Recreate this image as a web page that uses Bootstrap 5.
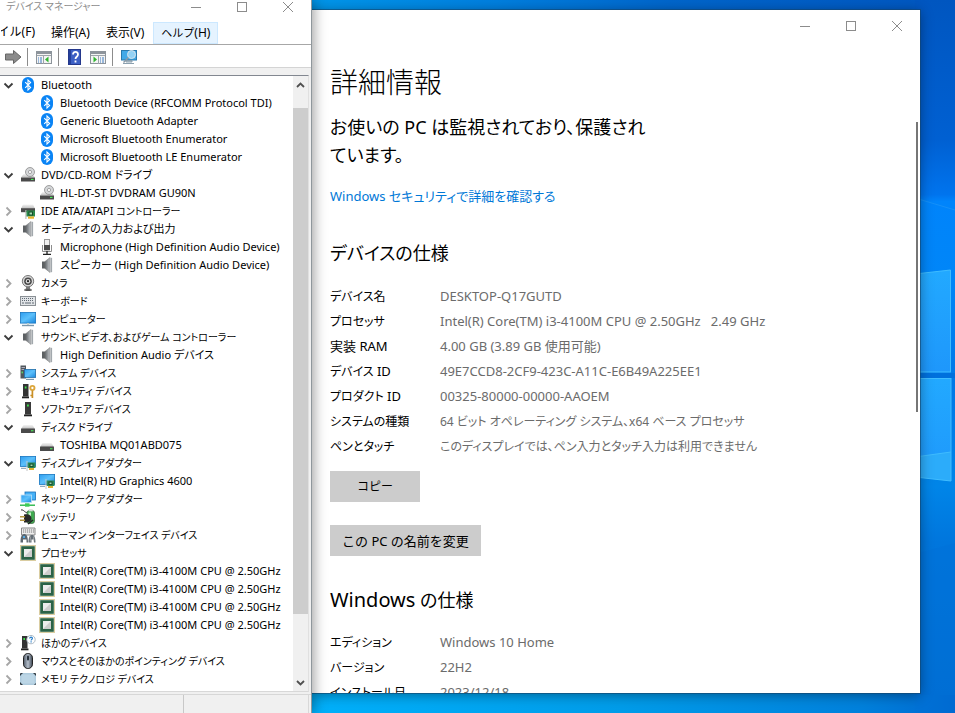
<!DOCTYPE html>
<html lang="ja">
<head>
<meta charset="utf-8">
<meta name="viewport" content="width=device-width, initial-scale=1">
<title>デバイス マネージャー</title>
<link href="https://cdn.jsdelivr.net/npm/bootstrap@5.3.0/dist/css/bootstrap.min.css" rel="stylesheet">
<style>
html, body { height: 100%; }
body { font-family: "Noto Sans", "Noto Sans CJK JP", sans-serif; font-feature-settings: "palt"; color: #000; font-size: 12px; line-height: 18px; }
button { font-family: inherit; }
.desktop { background: #0078d7; }
.wallpaper { left: 0; top: 0; }

/* shared window parts */
.caption-btn { background: none; border: 0; padding: 0; color: #8c8c8c; }
.caption-btn svg, .tool-btn svg, .twisty svg { display: block; }

/* device manager */
.dm-window { left: 0; top: 0; bottom: 0; width: 312px; background: #fff; border-right: 1px solid #8f979c; box-shadow: 2px 0 12px rgba(0,0,0,.38); z-index: 2; }
.dm-title { height: 21px; padding-left: 6px; color: #8d8d8d; }
.dm-title .dm-name { line-height: 12px; font-size: 10px; }
.dm-title .caption-btn { width: 46px; height: 13px; }
.dm-menu { height: 24px; border-bottom: 1px solid #a7a7a7; }
.dm-menu button { background: none; border: 1px solid transparent; padding: 0 7px; height: 22px; line-height: 18px; margin-top: 1px; font-size: 12px; white-space: nowrap; }
.dm-menu .clipped { width: 43px; padding-left: 0; display: flex; justify-content: flex-end; overflow: hidden; }
.dm-menu .hot { background: #e5f3ff; border-color: #cce8ff; margin-left: 1px; }
.dm-menu .kana { font-size: 11px; }
.dm-tools { height: 23px; border-bottom: 1px solid #d4d4d4; padding: 2px 0 0 5px; }
.tool-btn { background: none; border: 0; padding: 0; }
.tool-sep { width: 1px; height: 18px; background: #8c8c8c; }
.dm-body { background: #f0f0f0; padding: 7px 2px 2px 0; min-height: 0; }
.dm-tree-box { background: #fff; border-top: 1px solid #828790; border-right: 1px solid #e0e0e0; border-bottom: 1px solid #d8d8d8; }
.dm-tree { font-size: 11px; }
.dm-tree .kana { font-size: 10px; }
.tree-row { height: 18px; padding-left: 2px; white-space: nowrap; }
.tree-row .twisty { width: 14px; height: 18px; background: none; border: 0; padding: 0; margin-right: 4px; }
.tree-row .glyph { width: 16px; height: 16px; margin-right: 5px; flex: none; }
.tree-row.child { padding-left: 39px; }
.dm-scroll { width: 15px; background: #f0f0f0; }
.dm-scroll .arrow { height: 17px; background: none; border: 0; padding: 0; }
.dm-scroll .before { height: 15px; }
.dm-scroll .thumb { flex: 507; background: #cdcdcd; }
.dm-scroll .after { flex: 60; }
.dm-status { height: 19px; background: #f0f0f0; border-top: 1px solid #d7d7d7; }
.dm-status .pane { width: 184px; border-right: 1px solid #c8c8c8; }
.dm-status .pane-end { border-right: 1px solid #d8d8d8; margin-right: 2px; }

/* settings */
.set-window { left: 311px; right: 35px; top: 10px; bottom: 20px; background: #fff; box-shadow: 0 0 0 1px rgba(20,70,110,.6), 0 2px 12px rgba(0,0,0,.4); z-index: 1; }
.set-title { height: 32px; }
.set-title .caption-btn { width: 46px; height: 32px; }
.set-content { padding: 22px 19px 0; }
.set-content h1 { font-size: 28px; line-height: 36px; font-weight: 300; margin: 0; }
.set-note { font-size: 18px; line-height: 28px; width: 330px; margin: 13px 0 0; }
.set-link { display: block; font-size: 13px; line-height: 20px; margin-top: 17px; color: #0078d7; text-decoration: none; }
.set-content h2 { font-size: 18px; line-height: 28px; font-weight: 400; margin: 33px 0 17px; }
.set-content h2 .latin { font-size: 20px; line-height: 20px; }
.set-content .second { margin-top: 30px; margin-bottom: 16px; }
.spec { font-size: 13px; line-height: 25px; }
.spec tr { height: 25px; }
.spec th { width: 110px; font-weight: 400; padding: 0; }
.spec td { padding: 0; color: #6b6b6b; white-space: pre; }
.spec .kana { font-size: 12px; line-height: 20px; }
.set-btn { display: block; min-width: 90px; height: 31px; border: 0; border-radius: 0; background: #ccc; padding: 0 12px; font-size: 13px; color: #000; }
.btn-copy { margin-top: 12px; font-size: 12px; }
.btn-rename { margin-top: 23px; }
.set-bar { width: 2px; height: 290px; right: 2px; top: 112px; background: #767676; }
</style>
</head>
<body>
<svg width="0" height="0" class="position-absolute" aria-hidden="true">
<defs>
<linearGradient id="gScreen" x1="0" y1="0" x2="1" y2="1"><stop offset="0" stop-color="#2d9df0"/><stop offset=".5" stop-color="#5cc0fb"/><stop offset="1" stop-color="#1b86dc"/></linearGradient>
<linearGradient id="gSpk" x1="0" x2="1"><stop offset="0" stop-color="#62676b"/><stop offset="1" stop-color="#c4c8cc"/></linearGradient>
<linearGradient id="gMouse" x1="0" x2="1"><stop offset="0" stop-color="#4f5a68"/><stop offset=".5" stop-color="#b6c0cc"/><stop offset="1" stop-color="#3b4450"/></linearGradient>
<linearGradient id="gTop" x1="0" y1="0" x2="0" y2="1"><stop offset="0" stop-color="#f4f4f4"/><stop offset="1" stop-color="#bdbdbd"/></linearGradient>
<symbol id="i-open" viewBox="0 0 14 18"><path d="M2.500 7.500 6.500 11.500 10.500 7.500" fill="none" stroke="#3c3c3c" stroke-width="1.800"/></symbol>
<symbol id="i-shut" viewBox="0 0 14 18"><path d="M4.500 5.500 8.500 9.500 4.500 13.500" fill="none" stroke="#a6a6a6" stroke-width="1.800"/></symbol>
<symbol id="i-bt" viewBox="0 0 16 16"><rect x="2" y="0" width="12" height="16" rx="6" fill="#0a84f5"/><path d="M5.200 5.200 10.600 10.600 8 13V3l2.600 2.400L5.200 10.800" fill="none" stroke="#fff" stroke-width="1.100"/></symbol>
<symbol id="i-dvd" viewBox="0 0 16 16"><path d="M3.500 7h9L15 10.500H1z" fill="url(#gTop)"/><circle cx="10" cy="5" r="4.500" fill="#d5d7d9" stroke="#8c8c8c" stroke-width=".8"/><circle cx="10" cy="5" r="1.600" fill="#fff" stroke="#888" stroke-width=".7"/><rect x="1" y="10.500" width="14" height="4" fill="#4a4a4a"/><rect x="11" y="11.900" width="2.500" height="1.100" fill="#4bea5b"/></symbol>
<symbol id="i-disk" viewBox="0 0 16 16"><path d="M3.500 6h9L15 10H1z" fill="url(#gTop)"/><rect x="1" y="9.600" width="14" height="4.400" rx=".6" fill="#4a4a4a"/><rect x="11" y="11.200" width="2.500" height="1.100" fill="#4bea5b"/></symbol>
<symbol id="i-ide" viewBox="0 0 16 16"><path d="M3 1.500h10l2 4H1z" fill="url(#gTop)"/><rect x="1" y="5.200" width="14" height="4" fill="#4b4b4b"/><rect x="5.300" y="7" width="1.200" height="9" fill="#bbb"/><rect x="6.500" y="7.500" width="8.500" height="6" fill="#2b8a4b"/><rect x="9" y="9" width="3.500" height="3" fill="#a3dcb2" stroke="#174a2a"/><rect x="8" y="13.500" width="6" height="2.200" fill="#e9b42a"/></symbol>
<symbol id="i-spk" viewBox="0 0 16 16"><path d="M3 4.500h3v7H3z" fill="#5c6063"/><path d="M6 4.500l5-4v15l-5-4z" fill="url(#gSpk)" stroke="#777" stroke-width=".5"/><path d="M12.300 .8v14.400" stroke="#a2a8ad" stroke-width="1.600"/></symbol>
<symbol id="i-mic" viewBox="0 0 16 16"><path d="M3.500 6v6.500h9V6" fill="none" stroke="#8d8d8d"/><rect x="5.500" y=".5" width="5" height="10.500" fill="#f1f1f1" stroke="#999"/><rect x="5" y="6" width="6" height="5" fill="#4a4a4a"/><path d="M8 12v3M4 15.300h8" stroke="#222" stroke-width="1.300"/></symbol>
<symbol id="i-cam" viewBox="0 0 16 16"><path d="M6.500 11h3l1 3.500h-5z" fill="#777"/><ellipse cx="8" cy="15" rx="4" ry="1" fill="#555"/><circle cx="8" cy="6.200" r="5.700" fill="#d8d8d8" stroke="#777"/><circle cx="8" cy="6.200" r="3.800" fill="#4a4a4a"/><circle cx="8" cy="6.200" r="2.200" fill="#ddd"/><circle cx="8" cy="6.200" r="1.100" fill="#222"/></symbol>
<symbol id="i-key" viewBox="0 0 16 16"><rect x=".5" y="3.500" width="15" height="9" fill="#e1e4e7" stroke="#8a9095"/><path d="M2 5.500h12M2 7.500h12" stroke="#5f6973" stroke-dasharray="1 1"/><path d="M2 10h2M5 10h6M12 10h2" stroke="#5f6973"/></symbol>
<symbol id="i-pc" viewBox="0 0 16 16"><rect x=".4" y="1.400" width="15.200" height="10.700" fill="url(#gScreen)" stroke="#1876c0" stroke-width=".8"/><path d="M2 14.500h12" stroke="#7c98ac" stroke-width="1.400"/><path d="M7 12h2v2H7z" fill="#bcc"/></symbol>
<symbol id="i-sys" viewBox="0 0 16 16"><rect x=".5" y=".5" width="5.500" height="13" fill="#50575c"/><path d="M1.500 2.500h3.500M1.500 4.500h3.500" stroke="#aab"/><rect x="1.600" y="6.500" width="1.200" height="1.800" fill="#5df06c"/><rect x="4.400" y="4.400" width="11.200" height="8" fill="url(#gScreen)" stroke="#246fa8" stroke-width=".8"/><path d="M6 14.400h8" stroke="#7c98ac" stroke-width="1.200"/></symbol>
<symbol id="i-sw" viewBox="0 0 16 16"><path d="M5 1h6v12.500H5z" fill="#3a3a3a"/><rect x="7" y="3.500" width="1.800" height="2" fill="#3fe44e"/><path d="M4 15.300h8v-1.800H4z" fill="#222"/></symbol>
<symbol id="i-sec" viewBox="0 0 16 16"><path d="M3 1h5.500v12.500H3z" fill="#333"/><rect x="4.800" y="3.500" width="1.700" height="2" fill="#3fe44e"/><path d="M2 15.300h7v-1.800H2z" fill="#222"/><circle cx="12.400" cy="5" r="2.100" fill="none" stroke="#dca63c" stroke-width="1.900"/><path d="M12.400 7.500v7.500M12.400 12.500h-2" stroke="#c98f25" stroke-width="1.700"/></symbol>
<symbol id="i-gpu" viewBox="0 0 16 16"><rect x=".4" y="1.400" width="15.200" height="10" fill="url(#gScreen)" stroke="#1876c0" stroke-width=".8"/><path d="M1 13.300h5" stroke="#7c98ac"/><path d="M7 6v10" stroke="#c6c6c6"/><rect x="7.700" y="7.500" width="7.800" height="5.500" fill="#2f8b58"/><rect x="10" y="9" width="3" height="2.600" fill="#9fd9b0" stroke="#164c2c"/><rect x="9" y="13" width="5" height="2" fill="#e1b12e"/></symbol>
<symbol id="i-net" viewBox="0 0 16 16"><rect x="5" y="1" width="10.500" height="8" fill="#46b1f7" stroke="#1a70b8" stroke-width=".8"/><rect x="1" y="4" width="10.500" height="7.500" fill="url(#gScreen)" stroke="#bfe2f8" stroke-width=".8"/><path d="M0 14.200h15" stroke="#28b648" stroke-width="1.400"/><rect x="5" y="12.300" width="4.500" height="3.400" fill="#3ecb59"/></symbol>
<symbol id="i-bat" viewBox="0 0 16 16"><path d="M1 1c3-1 4 4 7 2" fill="none" stroke="#333"/><rect x="7" y="1.500" width="7.500" height="13" rx="2.500" fill="#3faa50" stroke="#4b714e" stroke-width=".8"/><rect x="8.700" y=".2" width="4" height="2.200" fill="#d5ddd5"/><path d="M8.500 3.500H11v6H8.500z" fill="#c5eec8"/><path d="M4 5.500c5-1 7.500 1 7.500 4S8 14 4 13.500z" fill="#292929"/><path d="M0 7.700h5M0 11.300h5" stroke="#b3963f" stroke-width="1.400"/><path d="M8 15l5-4" stroke="#222" stroke-width="1.600"/></symbol>
<symbol id="i-hid" viewBox="0 0 16 16"><path d="M1.500 1h13.500v7H1.500z" fill="#eee" stroke="#898989"/><path d="M3 3h11M3 5h11" stroke="#777" stroke-dasharray="1.200 .8"/><path d="M.5 15.500c0-5 1-8.500 3.500-8.500S8 9 8 15.500H6.500v-3H3v3z" fill="#5e6870"/><circle cx="4" cy="10" r="1.100" fill="#52b9ff"/><path d="M8.500 15.500c0-5 1-7.500 3.500-7.500s3.500 2.500 3.500 7.500H14v-3h-2.500v3z" fill="#667078"/><path d="M10.300 9.500v5M13.700 9.500v5" stroke="#bbb" stroke-width=".7"/></symbol>
<symbol id="i-cpu" viewBox="0 0 16 16"><rect x=".5" y=".5" width="15" height="15" fill="none" stroke="#b59b43" stroke-dasharray="1 1"/><rect x="1.200" y="1.200" width="13.600" height="13.600" fill="#2b6346"/><rect x="4" y="4" width="8" height="8" fill="#cdcdcd"/><path d="M4 12V4h8z" fill="#ececec"/></symbol>
<symbol id="i-unk" viewBox="0 0 16 16"><path d="M2 1h5.500v12.500H2z" fill="#333"/><rect x="3.400" y="3" width="1.600" height="2" fill="#3fe44e"/><path d="M1 15.300h7.500v-1.800H1z" fill="#222"/><circle cx="11" cy="4.600" r="4.200" fill="#fff" stroke="#a5b3bf" stroke-width=".9"/><path d="M9.700 3.600c0-2 2.900-1.800 2.700-.2-.1.900-1.300 1-1.300 2.100M11.100 6.300v1.100" fill="none" stroke="#1e78c8" stroke-width="1.100"/></symbol>
<symbol id="i-mouse" viewBox="0 0 16 16"><rect x="3.500" y=".5" width="9" height="15" rx="4.300" fill="url(#gMouse)" stroke="#222"/><rect x="7" y="2.500" width="2" height="5" rx="1" fill="#26303a"/></symbol>
<symbol id="i-mem" viewBox="0 0 16 16"><rect x="0" y="2" width="16" height="12" rx="1" fill="#303a42"/><path d="M3 2h10l3 3v7l-2 2H3l-3-3V5z" fill="#aecbdd"/><rect x="1.500" y="3.500" width="13" height="9" fill="#bcd6e6"/></symbol>
<symbol id="i-min" viewBox="0 0 12 12"><path d="M1 6.500h10" stroke="currentColor"/></symbol>
<symbol id="i-max" viewBox="0 0 12 12"><rect x="1.500" y="1.500" width="9" height="9" fill="none" stroke="currentColor"/></symbol>
<symbol id="i-x" viewBox="0 0 12 12"><path d="M1 1l10 10M11 1L1 11" stroke="currentColor" fill="none"/></symbol>
</defs>
</svg>

<div class="desktop position-relative overflow-hidden vh-100">
<svg class="wallpaper position-absolute w-100 h-100" viewBox="0 0 955 713" preserveAspectRatio="xMaxYMid slice" aria-hidden="true">
<defs>
<linearGradient id="wTop" x1="0" x2="1"><stop offset=".33" stop-color="#0096ea"/><stop offset=".52" stop-color="#007fdf"/><stop offset=".7" stop-color="#0066cc"/><stop offset="1" stop-color="#0056c0"/></linearGradient>
<linearGradient id="wBot" x1="0" x2="1"><stop offset=".33" stop-color="#00b0fa"/><stop offset=".65" stop-color="#009ce9"/><stop offset=".9" stop-color="#0081dc"/><stop offset=".97" stop-color="#0070d4"/><stop offset="1" stop-color="#0068cf"/></linearGradient>
<linearGradient id="wSide" x1="0" y1="0" x2="0" y2="1"><stop offset="0" stop-color="#0056c0"/><stop offset=".2" stop-color="#0060d2"/><stop offset=".28" stop-color="#0074ee"/><stop offset=".29" stop-color="#0084fb"/><stop offset=".4" stop-color="#0086f8"/><stop offset=".55" stop-color="#0078e6"/><stop offset=".7" stop-color="#0085e8"/><stop offset=".78" stop-color="#0076dd"/><stop offset="1" stop-color="#006ed3"/></linearGradient>
<linearGradient id="wPane" x1="0" y1="0" x2="0" y2="1"><stop offset="0" stop-color="#22a9ff"/><stop offset="1" stop-color="#1e97fb"/></linearGradient>
</defs>
<rect width="955" height="360" fill="url(#wTop)"/>
<rect y="360" width="955" height="353" fill="url(#wBot)"/>
<rect x="915" width="40" height="695" fill="url(#wSide)"/>
<path d="M915 198 955 210" stroke="#1590f8" fill="none"/>
<path d="M915 274 950.500 270V372H915z" fill="url(#wPane)"/>
<path d="M915 378H951V481L915 477z" fill="url(#wPane)"/>
<path d="M915 457 951 452V481L915 477z" fill="#2cacfa"/>
<path d="M915 274 950.500 270V372M951 378V481L915 477M915 457 951 452M915 372h36M915 378.500h36" fill="none" stroke="#3fbcff"/>
<rect x="915" y="373" width="40" height="5" fill="#0070dd"/>
<path d="M915 554 955 543V713H915z" fill="#0070d6" opacity=".35"/>
</svg>

<main class="set-window position-absolute d-flex flex-column">
<div class="set-title d-flex justify-content-end flex-shrink-0">
<button class="caption-btn d-flex align-items-center justify-content-center" aria-label="最小化"><svg width="12" height="12"><use href="#i-min"/></svg></button>
<button class="caption-btn d-flex align-items-center justify-content-center" aria-label="最大化"><svg width="12" height="12"><use href="#i-max"/></svg></button>
<button class="caption-btn d-flex align-items-center justify-content-center" aria-label="閉じる"><svg width="12" height="12"><use href="#i-x"/></svg></button>
</div>
<div class="set-content flex-grow-1 overflow-hidden">
<h1>詳細情報</h1>
<p class="set-note">お使いの PC は監視されており、保護され<br>ています。</p>
<a class="set-link" href="#">Windows セキュリティで詳細を確認する</a>
<h2>デバイスの仕様</h2>
<table class="spec">
<tr><th scope="row"><span class="kana">デバイス名</span></th><td>DESKTOP-Q17GUTD</td></tr>
<tr><th scope="row"><span class="kana">プロセッサ</span></th><td>Intel(R) Core(TM) i3-4100M CPU @ 2.50GHz   2.49 GHz</td></tr>
<tr><th scope="row">実装 RAM</th><td>4.00 GB (3.89 GB 使用可能)</td></tr>
<tr><th scope="row"><span class="kana">デバイス</span> ID</th><td>49E7CCD8-2CF9-423C-A11C-E6B49A225EE1</td></tr>
<tr><th scope="row"><span class="kana">プロダクト</span> ID</th><td>00325-80000-00000-AAOEM</td></tr>
<tr><th scope="row"><span class="kana">システムの種類</span></th><td><span class="kana">64 ビット オペレーティング システム、x64 ベース プロセッサ</span></td></tr>
<tr><th scope="row"><span class="kana">ペンとタッチ</span></th><td><span class="kana">このディスプレイでは、ペン入力とタッチ入力は利用できません</span></td></tr>
</table>
<button class="set-btn btn-copy">コピー</button>
<button class="set-btn btn-rename">この PC の名前を変更</button>
<h2 class="second"><span class="latin">Windows</span> の仕様</h2>
<table class="spec">
<tr><th scope="row"><span class="kana">エディション</span></th><td>Windows 10 Home</td></tr>
<tr><th scope="row"><span class="kana">バージョン</span></th><td>22H2</td></tr>
<tr><th scope="row"><span class="kana">インストール日</span></th><td>2023/12/18</td></tr>
</table>
</div>
<div class="set-bar position-absolute"></div>
</main>

<aside class="dm-window position-absolute d-flex flex-column">
<div class="dm-title d-flex flex-shrink-0">
<span class="dm-name me-auto">デバイス マネージャー</span>
<button class="caption-btn d-flex align-items-center justify-content-center" aria-label="最小化"><svg width="12" height="12"><use href="#i-min"/></svg></button>
<button class="caption-btn d-flex align-items-center justify-content-center" aria-label="最大化"><svg width="12" height="12"><use href="#i-max"/></svg></button>
<button class="caption-btn d-flex align-items-center justify-content-center" aria-label="閉じる"><svg width="12" height="12"><use href="#i-x"/></svg></button>
</div>
<nav class="dm-menu d-flex flex-shrink-0">
<button class="clipped">ファイル(F)</button><button>操作(A)</button><button>表示(V)</button><button class="hot"><span class="kana">ヘルプ</span>(H)</button>
</nav>
<div class="dm-tools d-flex align-items-center flex-shrink-0">
<button class="tool-btn" aria-label="進む"><svg width="18" height="16"><path d="M.5 5h8V1.500L16 8l-7.500 6.500V11h-8z" fill="#8b8b8b" stroke="#666"/></svg></button>
<span class="tool-sep ms-1 me-2"></span>
<button class="tool-btn" aria-label="コンソール ツリーの表示"><svg width="18" height="16"><rect x=".5" y="2.500" width="15" height="12" fill="#f4f4f4" stroke="#8d949b"/><path d="M1 4h14" stroke="#8d949b" stroke-width="2"/><path d="M1 6.500h14M7.500 7v8" stroke="#9da4aa"/><path d="M2 9h4M2 11h4M2 13h4" stroke="#3d7bc0" stroke-dasharray="1 1 2"/><path d="M12.500 7.500v6L9 10.500z" fill="#2fb52f"/></svg></button>
<span class="tool-sep ms-1 me-2"></span>
<button class="tool-btn" aria-label="ヘルプ"><svg width="15" height="16" viewBox="-1 0 15 16"><rect x=".5" y=".5" width="12" height="15" fill="#3c5fc4" stroke="#24388c"/><path d="M1 1h2v14H1z" fill="#24409c"/><path d="M5 5.500C5 2 10 2 10 5.500 10 8 7.500 7.500 7.500 10M7.500 11.500v2" fill="none" stroke="#fff" stroke-width="1.800"/></svg></button>
<button class="tool-btn ms-2" aria-label="操作ウィンドウの表示"><svg width="18" height="16"><rect x=".5" y="2.500" width="15" height="12" fill="#f4f4f4" stroke="#8d949b"/><path d="M1 4h14" stroke="#8d949b" stroke-width="2"/><path d="M1 6.500h14M8.500 7v8" stroke="#9da4aa"/><path d="M10 9h4M10 11h4M10 13h4" stroke="#3d7bc0" stroke-dasharray="1 1 2"/><path d="M3.500 7.500v6L7 10.500z" fill="#2fb52f"/></svg></button>
<span class="tool-sep ms-1 me-2"></span>
<button class="tool-btn" aria-label="ハードウェア変更のスキャン"><svg width="17" height="16"><rect x=".5" y="1.500" width="15" height="9.500" fill="#41a9e8" stroke="#2979ad"/><path d="M5 11.500h6v1.500H5zM2 14.500h11" fill="#b5c3cd" stroke="#8ba0af"/><circle cx="10.500" cy="5.500" r="4" fill="#a8dcf8" fill-opacity=".8" stroke="#d7e4ec"/><path d="M7.500 8.500 2.500 13.500" stroke="#8a98a4" stroke-width="1.500"/></svg></button>
</div>
<div class="dm-body flex-grow-1 d-flex">
<div class="dm-tree-box flex-grow-1 d-flex overflow-hidden">
<ul class="dm-tree list-unstyled mb-0 flex-grow-1 overflow-hidden">
<li class="tree-row d-flex align-items-center"><button class="twisty" aria-label="折りたたむ"><svg width="14" height="18"><use href="#i-open"/></svg></button><svg class="glyph"><use href="#i-bt"/></svg>Bluetooth</li>
<li class="tree-row child d-flex align-items-center"><svg class="glyph"><use href="#i-bt"/></svg>Bluetooth Device (RFCOMM Protocol TDI)</li>
<li class="tree-row child d-flex align-items-center"><svg class="glyph"><use href="#i-bt"/></svg>Generic Bluetooth Adapter</li>
<li class="tree-row child d-flex align-items-center"><svg class="glyph"><use href="#i-bt"/></svg>Microsoft Bluetooth Enumerator</li>
<li class="tree-row child d-flex align-items-center"><svg class="glyph"><use href="#i-bt"/></svg>Microsoft Bluetooth LE Enumerator</li>
<li class="tree-row d-flex align-items-center"><button class="twisty" aria-label="折りたたむ"><svg width="14" height="18"><use href="#i-open"/></svg></button><svg class="glyph"><use href="#i-dvd"/></svg>DVD/CD-ROM ドライブ</li>
<li class="tree-row child d-flex align-items-center"><svg class="glyph"><use href="#i-dvd"/></svg>HL-DT-ST DVDRAM GU90N</li>
<li class="tree-row d-flex align-items-center"><button class="twisty" aria-label="展開"><svg width="14" height="18"><use href="#i-shut"/></svg></button><svg class="glyph"><use href="#i-ide"/></svg><span>IDE ATA/ATAPI <span class="kana">コントローラー</span></span></li>
<li class="tree-row d-flex align-items-center"><button class="twisty" aria-label="折りたたむ"><svg width="14" height="18"><use href="#i-open"/></svg></button><svg class="glyph"><use href="#i-spk"/></svg>オーディオの入力および出力</li>
<li class="tree-row child d-flex align-items-center"><svg class="glyph"><use href="#i-mic"/></svg>Microphone (High Definition Audio Device)</li>
<li class="tree-row child d-flex align-items-center"><svg class="glyph"><use href="#i-spk"/></svg>スピーカー (High Definition Audio Device)</li>
<li class="tree-row d-flex align-items-center"><button class="twisty" aria-label="展開"><svg width="14" height="18"><use href="#i-shut"/></svg></button><svg class="glyph"><use href="#i-cam"/></svg><span class="kana">カメラ</span></li>
<li class="tree-row d-flex align-items-center"><button class="twisty" aria-label="展開"><svg width="14" height="18"><use href="#i-shut"/></svg></button><svg class="glyph"><use href="#i-key"/></svg><span class="kana">キーボード</span></li>
<li class="tree-row d-flex align-items-center"><button class="twisty" aria-label="展開"><svg width="14" height="18"><use href="#i-shut"/></svg></button><svg class="glyph"><use href="#i-pc"/></svg><span class="kana">コンピューター</span></li>
<li class="tree-row d-flex align-items-center"><button class="twisty" aria-label="折りたたむ"><svg width="14" height="18"><use href="#i-open"/></svg></button><svg class="glyph"><use href="#i-spk"/></svg><span class="kana">サウンド、ビデオ、およびゲーム コントローラー</span></li>
<li class="tree-row child d-flex align-items-center"><svg class="glyph"><use href="#i-spk"/></svg>High Definition Audio デバイス</li>
<li class="tree-row d-flex align-items-center"><button class="twisty" aria-label="展開"><svg width="14" height="18"><use href="#i-shut"/></svg></button><svg class="glyph"><use href="#i-sys"/></svg><span class="kana">システム デバイス</span></li>
<li class="tree-row d-flex align-items-center"><button class="twisty" aria-label="展開"><svg width="14" height="18"><use href="#i-shut"/></svg></button><svg class="glyph"><use href="#i-sec"/></svg><span class="kana">セキュリティ デバイス</span></li>
<li class="tree-row d-flex align-items-center"><button class="twisty" aria-label="展開"><svg width="14" height="18"><use href="#i-shut"/></svg></button><svg class="glyph"><use href="#i-sw"/></svg><span class="kana">ソフトウェア デバイス</span></li>
<li class="tree-row d-flex align-items-center"><button class="twisty" aria-label="折りたたむ"><svg width="14" height="18"><use href="#i-open"/></svg></button><svg class="glyph"><use href="#i-disk"/></svg><span class="kana">ディスク ドライブ</span></li>
<li class="tree-row child d-flex align-items-center"><svg class="glyph"><use href="#i-disk"/></svg>TOSHIBA MQ01ABD075</li>
<li class="tree-row d-flex align-items-center"><button class="twisty" aria-label="折りたたむ"><svg width="14" height="18"><use href="#i-open"/></svg></button><svg class="glyph"><use href="#i-gpu"/></svg><span class="kana">ディスプレイ アダプター</span></li>
<li class="tree-row child d-flex align-items-center"><svg class="glyph"><use href="#i-gpu"/></svg>Intel(R) HD Graphics 4600</li>
<li class="tree-row d-flex align-items-center"><button class="twisty" aria-label="展開"><svg width="14" height="18"><use href="#i-shut"/></svg></button><svg class="glyph"><use href="#i-net"/></svg><span class="kana">ネットワーク アダプター</span></li>
<li class="tree-row d-flex align-items-center"><button class="twisty" aria-label="展開"><svg width="14" height="18"><use href="#i-shut"/></svg></button><svg class="glyph"><use href="#i-bat"/></svg><span class="kana">バッテリ</span></li>
<li class="tree-row d-flex align-items-center"><button class="twisty" aria-label="展開"><svg width="14" height="18"><use href="#i-shut"/></svg></button><svg class="glyph"><use href="#i-hid"/></svg><span class="kana">ヒューマン インターフェイス デバイス</span></li>
<li class="tree-row d-flex align-items-center"><button class="twisty" aria-label="折りたたむ"><svg width="14" height="18"><use href="#i-open"/></svg></button><svg class="glyph"><use href="#i-cpu"/></svg><span class="kana">プロセッサ</span></li>
<li class="tree-row child d-flex align-items-center"><svg class="glyph"><use href="#i-cpu"/></svg>Intel(R) Core(TM) i3-4100M CPU @ 2.50GHz</li>
<li class="tree-row child d-flex align-items-center"><svg class="glyph"><use href="#i-cpu"/></svg>Intel(R) Core(TM) i3-4100M CPU @ 2.50GHz</li>
<li class="tree-row child d-flex align-items-center"><svg class="glyph"><use href="#i-cpu"/></svg>Intel(R) Core(TM) i3-4100M CPU @ 2.50GHz</li>
<li class="tree-row child d-flex align-items-center"><svg class="glyph"><use href="#i-cpu"/></svg>Intel(R) Core(TM) i3-4100M CPU @ 2.50GHz</li>
<li class="tree-row d-flex align-items-center"><button class="twisty" aria-label="展開"><svg width="14" height="18"><use href="#i-shut"/></svg></button><svg class="glyph"><use href="#i-unk"/></svg><span class="kana">ほかのデバイス</span></li>
<li class="tree-row d-flex align-items-center"><button class="twisty" aria-label="展開"><svg width="14" height="18"><use href="#i-shut"/></svg></button><svg class="glyph"><use href="#i-mouse"/></svg><span class="kana">マウスとそのほかのポインティング デバイス</span></li>
<li class="tree-row d-flex align-items-center"><button class="twisty" aria-label="展開"><svg width="14" height="18"><use href="#i-shut"/></svg></button><svg class="glyph"><use href="#i-mem"/></svg><span class="kana">メモリ テクノロジ デバイス</span></li>
</ul>
<div class="dm-scroll d-flex flex-column flex-shrink-0">
<button class="arrow flex-shrink-0" aria-label="上へ"><svg width="15" height="17" class="d-block"><path d="M4 11 7.500 7.500 11 11" fill="none" stroke="#505050" stroke-width="1.800"/></svg></button>
<div class="before flex-shrink-0"></div>
<div class="thumb"></div>
<div class="after"></div>
<button class="arrow flex-shrink-0" aria-label="下へ"><svg width="15" height="17" class="d-block"><path d="M4 7 7.500 10.500 11 7" fill="none" stroke="#505050" stroke-width="1.800"/></svg></button>
</div>
</div>
</div>
<div class="dm-status d-flex flex-shrink-0"><div class="pane"></div><div class="pane-end flex-grow-1"></div></div>
</aside>
</div>
<script src="https://cdn.jsdelivr.net/npm/bootstrap@5.3.0/dist/js/bootstrap.bundle.min.js"></script>
</body>
</html>
